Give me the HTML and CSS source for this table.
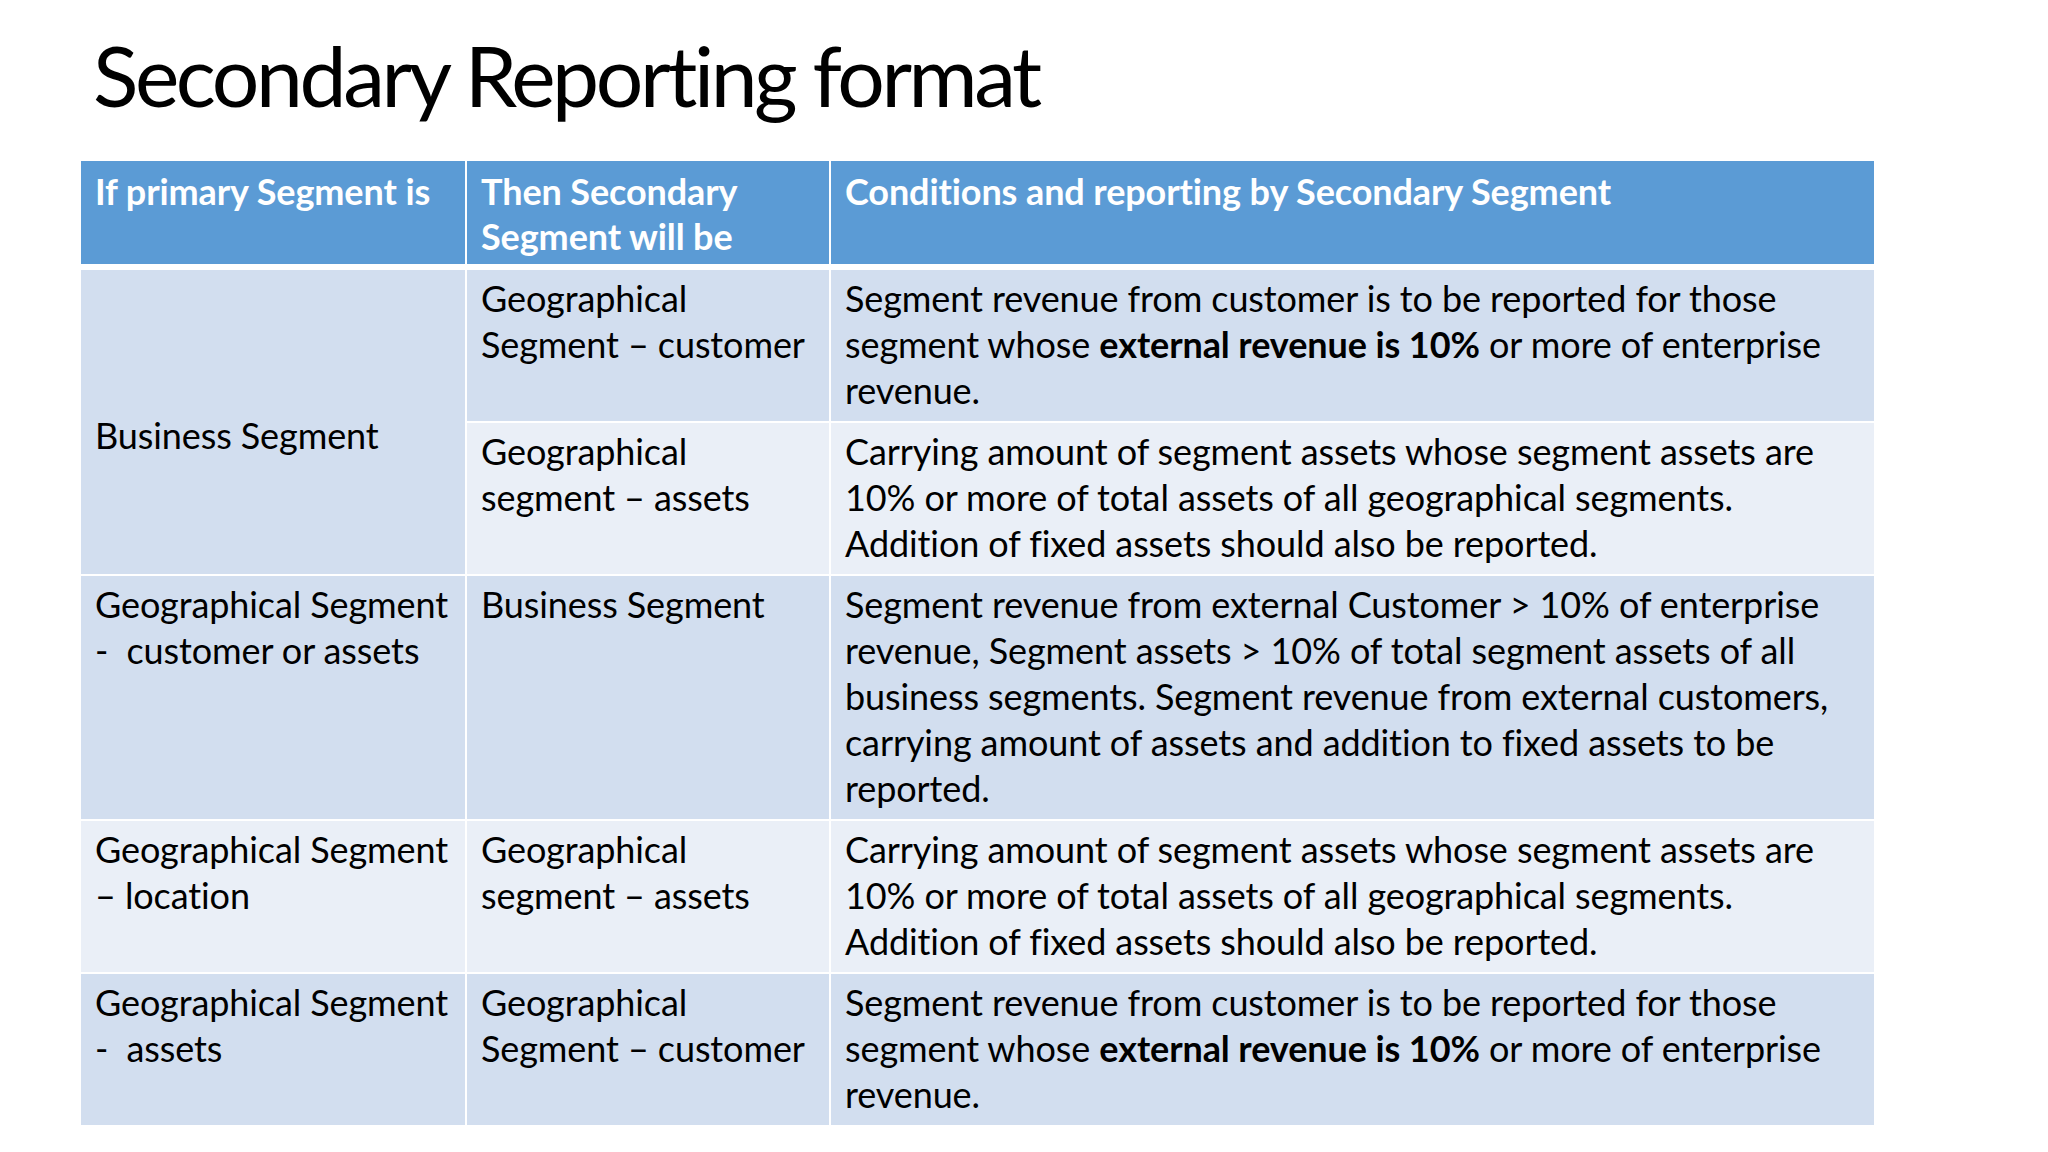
FILE: index.html
```html
<!DOCTYPE html>
<html lang="en">
<head>
<meta charset="utf-8">
<title>Secondary Reporting format</title>
<link rel="stylesheet" href="styles.css">
</head>
<body>
<div class="slide">
  <h1 class="title">Secondary Reporting format</h1>
  <table class="grid">
    <colgroup>
      <col class="w1">
      <col class="w2">
      <col class="w3">
    </colgroup>
    <thead>
      <tr>
        <th class="first">If primary Segment is</th>
        <th>Then Secondary<br>Segment will be</th>
        <th>Conditions and reporting by Secondary Segment</th>
      </tr>
    </thead>
    <tbody>
      <tr class="dark top">
        <td class="first mid" rowspan="2">Business Segment</td>
        <td>Geographical<br>Segment – customer</td>
        <td>Segment revenue from customer is to be reported for those<br>segment whose <b>external revenue is 10%</b> or more of enterprise<br>revenue.</td>
      </tr>
      <tr class="light">
        <td>Geographical<br>segment – assets</td>
        <td>Carrying amount of segment assets whose segment assets are<br>10% or more of total assets of all geographical segments.<br>Addition of fixed assets should also be reported.</td>
      </tr>
      <tr class="dark">
        <td class="first">Geographical Segment<br>-&nbsp; customer or assets</td>
        <td>Business Segment</td>
        <td>Segment revenue from external Customer &gt; 10% of enterprise<br>revenue, Segment assets &gt; 10% of total segment assets of all<br>business segments. Segment revenue from external customers,<br>carrying amount of assets and addition to fixed assets to be<br>reported.</td>
      </tr>
      <tr class="light">
        <td class="first">Geographical Segment<br>– location</td>
        <td>Geographical<br>segment – assets</td>
        <td>Carrying amount of segment assets whose segment assets are<br>10% or more of total assets of all geographical segments.<br>Addition of fixed assets should also be reported.</td>
      </tr>
      <tr class="dark">
        <td class="first">Geographical Segment<br>-&nbsp; assets</td>
        <td>Geographical<br>Segment – customer</td>
        <td>Segment revenue from customer is to be reported for those<br>segment whose <b>external revenue is 10%</b> or more of enterprise<br>revenue.</td>
      </tr>
    </tbody>
  </table>
</div>
</body>
</html>
```
FILE: styles.css
```css
html, body {
  margin: 0;
  padding: 0;
  background: #ffffff;
}

body {
  font-family: Lato, "Liberation Sans", sans-serif;
  color: #000000;
  font-variant-ligatures: none;
}

.slide {
  padding: 25px 0 0 81px;
}

.title {
  margin: 0 0 36px 12px;
  font-size: 84px;
  line-height: 100px;
  font-weight: 400;
  letter-spacing: -3.4px;
}

.grid {
  border-collapse: separate;
  border-spacing: 0;
  table-layout: fixed;
  width: 1793px;
}

.w1 { width: 384px; }
.w2 { width: 364px; }
.w3 { width: 1045px; }

.grid th,
.grid td {
  box-sizing: border-box;
  padding: 5px 8px 8px 14px;
  font-size: 36px;
  line-height: 46px;
  letter-spacing: -0.1px;
  text-align: left;
  vertical-align: top;
  white-space: nowrap;
  overflow: hidden;
  border-left: 2px solid #ffffff;
  border-top: 2px solid #ffffff;
}

.grid th.first,
.grid td.first {
  border-left: 0;
}

.grid thead th {
  background: #5b9bd5;
  color: #ffffff;
  font-weight: 700;
  line-height: 45px;
  padding-top: 8px;
  padding-bottom: 5px;
  border-top: 0;
}

.grid tbody tr.top td {
  border-top: 6px solid #ffffff;
}

.grid td.mid {
  vertical-align: middle;
  padding-top: 33px;
}

.dark td { background: #d2deef; }
.light td { background: #eaeff7; }
```
